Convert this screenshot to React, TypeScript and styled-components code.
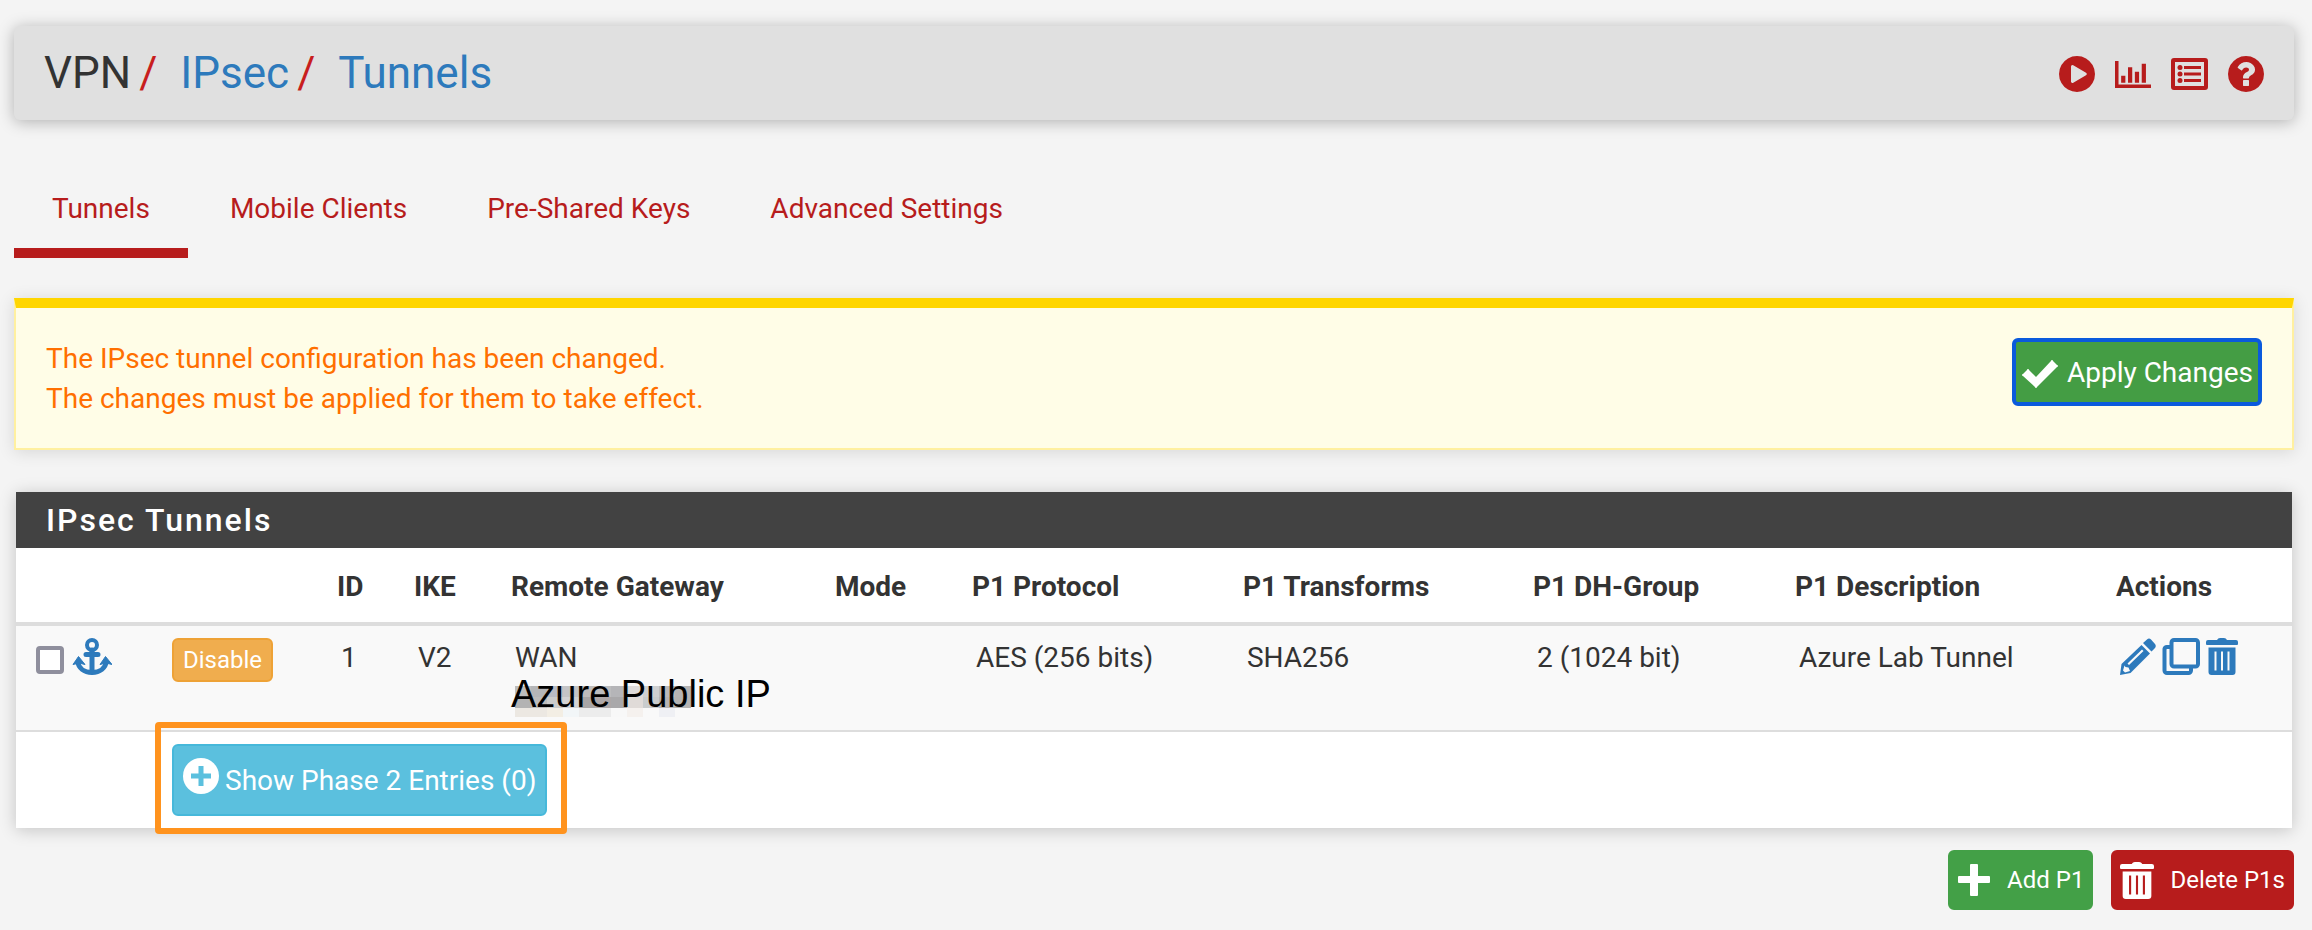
import React from "react";
import styled, { createGlobalStyle } from "styled-components";

const color = {
  page: "#f4f4f4",
  bar: "#e0e0e0",
  red: "#b71c1c",
  link: "#2d7abc",
  text: "#333333",
  line: "#dddddd",
};

const GlobalStyle = createGlobalStyle`
  * { box-sizing: border-box; }
  body {
    margin: 0;
    background: ${color.page};
    color: ${color.text};
    font-family: Roboto, "Liberation Sans", sans-serif;
    font-size: 28px;
    line-height: 40px;
  }
  a { color: inherit; text-decoration: none; }
  svg { display: block; flex: none; }
`;

const Page = styled.div`
  padding: 26px 18px 20px 14px;
`;

const TitleBar = styled.header`
  display: flex;
  align-items: center;
  justify-content: space-between;
  min-height: 94px;
  padding: 0 30px;
  border-radius: 6px;
  background: ${color.bar};
  box-shadow: 0 2px 16px rgba(0, 0, 0, 0.28);
`;

const Breadcrumb = styled.h1`
  display: flex;
  margin: 0;
  font-size: 44px;
  line-height: 52px;
  font-weight: 400;
`;

const Crumb = styled.span`
  & + &::before {
    content: "/";
    margin: 0 23px 0 8px;
    color: #c81e1e;
  }
`;

const CrumbLink = styled.a`
  color: ${color.link};
`;

const TitleIcons = styled.nav`
  display: flex;
  align-items: center;
  gap: 20px;
  padding-top: 2px;
  color: ${color.red};
`;

const Tabs = styled.nav`
  display: flex;
  flex-wrap: wrap;
  gap: 4px;
  margin: 48px 0 40px;
`;

const Tab = styled.a<{ $active?: boolean }>`
  padding: 21px 38px 19px;
  border-bottom: 10px solid ${(p) => (p.$active ? color.red : "transparent")};
  color: ${color.red};
`;

const Alert = styled.section`
  display: flex;
  align-items: flex-start;
  justify-content: space-between;
  padding: 30px;
  border: 2px solid #fff0a0;
  border-top: 10px solid #ffd600;
  background: #fffde7;
  box-shadow: 0 2px 16px rgba(0, 0, 0, 0.12);
  color: #ff6f00;
`;

const AlertText = styled.p`
  margin: 0;
  padding-top: 1px;
  margin-bottom: -1px;
`;

const variants = {
  success: { bg: "#43a047", border: "#43a047" },
  focused: { bg: "#449d44", border: "#0a5adc" },
  danger: { bg: "#b71c1c", border: "#b71c1c" },
  warning: { bg: "#f0ad4e", border: "#eea236" },
  info: { bg: "#5bc0de", border: "#46b8da" },
};

const sizes = {
  small: { height: 44, top: 0, pad: 9, font: 24, gap: 0 },
  medium: { height: 60, top: 0, pad: 7, font: 24, gap: 16 },
  large: { height: 68, top: 2, pad: 5, font: 28, gap: 8 },
  wide: { height: 72, top: 2, pad: 9, font: 28, gap: 6 },
};

const Button = styled.button<{
  $variant: keyof typeof variants;
  $size: keyof typeof sizes;
}>`
  display: inline-flex;
  align-items: center;
  gap: ${(p) => sizes[p.$size].gap}px;
  height: ${(p) => sizes[p.$size].height}px;
  padding: ${(p) => sizes[p.$size].top}px ${(p) => sizes[p.$size].pad}px 0;
  border: ${(p) => (p.$variant === "focused" ? 4 : 2)}px solid
    ${(p) => variants[p.$variant].border};
  border-radius: 6px;
  background: ${(p) => variants[p.$variant].bg};
  color: #ffffff;
  font: inherit;
  font-size: ${(p) => sizes[p.$size].font}px;
  white-space: nowrap;
  cursor: pointer;
`;

const Panel = styled.section`
  margin: 42px 2px 0;
  background: #ffffff;
  box-shadow: 0 2px 16px rgba(0, 0, 0, 0.2);
`;

const PanelTitle = styled.h2`
  margin: 0;
  padding: 8px 30px;
  background: #424242;
  color: #ffffff;
  font-size: 32px;
  line-height: 40px;
  font-weight: 500;
  letter-spacing: 2px;
`;

const Table = styled.table`
  width: 100%;
  border-collapse: separate;
  border-spacing: 0;
  table-layout: fixed;
`;

const Col = styled.col<{ $share: number }>`
  width: ${(p) => p.$share}%;
`;

const HeadCell = styled.th`
  padding: 19px 0 15px 6px;
  border-bottom: 4px solid ${color.line};
  text-align: left;
  font-weight: 700;
  white-space: nowrap;
`;

const Cell = styled.td`
  padding: 12px 0 12px 10px;
  vertical-align: top;
  white-space: nowrap;
  background: #f9f9f9;
`;

const DetailCell = styled(Cell)`
  border-top: 2px solid ${color.line};
  background: #ffffff;
`;

const SelectBox = styled.div`
  display: flex;
  align-items: flex-start;
  gap: 8px;
  padding-left: 10px;
  color: ${color.link};
`;

const CheckBox = styled.input`
  appearance: none;
  width: 28px;
  height: 28px;
  margin: 8px 0 0;
  border: 4px solid #8f8f9d;
  border-radius: 4px;
  background: #ffffff;
`;

const Actions = styled.div`
  display: flex;
  gap: 6px;
  color: ${color.link};
`;

const GatewayNote = styled.div`
  position: relative;
  margin: 0 0 8px -4px;
  color: #000000;
  font-family: "Liberation Sans", Arial, sans-serif;
  font-size: 38px;
  line-height: 32px;
`;

const NoteText = styled.span`
  position: relative;
`;

const Redaction = styled.svg`
  position: absolute;
  left: 4px;
  top: 8px;
`;

const HighlightAnchor = styled.div`
  position: relative;
  display: inline-flex;
  vertical-align: top;
`;

const Highlight = styled.div`
  position: absolute;
  inset: -22px -20px -18px -17px;
  border: 6px solid #ff931e;
  border-radius: 4px;
  pointer-events: none;
`;

const FooterActions = styled.div`
  display: flex;
  justify-content: flex-end;
  gap: 18px;
  margin-top: 22px;
`;

const PlayIcon = () => (
  <svg width="36" height="36" viewBox="128 128 1536 1536" fill="currentColor">
    <path d="M896 128q209 0 385.500 103t279.500 279.500 103 385.500-103 385.500-279.500 279.500-385.500 103-385.500-103-279.500-279.500-103-385.500 103-385.500 279.500-279.500 385.500-103zm384 823q32-18 32-55t-32-55l-544-320q-31-19-64-1-32 19-32 55v640q0 36 32 55 16 8 32 8 17 0 32-9z" />
  </svg>
);

const ChartIcon = () => (
  <svg width="36" height="27" viewBox="0 128 2048 1536" fill="currentColor">
    <path d="M0 128h200v1336h1848v200H0z M350 960h240v400H350z M740 480h240v880H740z M1130 740h240v620h-240z M1520 280h240v1080h-240z" />
  </svg>
);

const ListIcon = () => (
  <svg width="37" height="32" viewBox="0 0 37 32" fill="currentColor">
    <path
      fillRule="evenodd"
      d="M3 0h31a3 3 0 0 1 3 3v26a3 3 0 0 1-3 3H3a3 3 0 0 1-3-3V3a3 3 0 0 1 3-3zM4 4v24h29V4z"
    />
    <circle cx="9" cy="9.500" r="2.500" />
    <circle cx="9" cy="16" r="2.500" />
    <circle cx="9" cy="22.500" r="2.500" />
    <path d="M13 8h17v3H13zM13 14.500h17v3H13zM13 21h17v3H13z" />
  </svg>
);

const HelpIcon = () => (
  <svg width="36" height="36" viewBox="128 128 1536 1536" fill="currentColor">
    <path d="M1024 1376v-192q0-14-9-23t-23-9h-192q-14 0-23 9t-9 23v192q0 14 9 23t23 9h192q14 0 23-9t9-23zm256-672q0-88-55.500-163t-138.500-116-170-41q-243 0-371 213-15 24 8 42l132 100q7 6 19 6 16 0 25-12 53-68 86-92 34-24 86-24 48 0 85.500 26t37.500 59q0 38-20 61t-68 45q-63 28-115.500 86.500t-52.500 125.500v36q0 14 9 23t23 9h192q14 0 23-9t9-23q0-19 21.500-49.500t54.500-49.500q32-18 49-28.500t46-35 44.500-48 28-60.500 12.500-81zm384 192q0 209-103 385.500t-279.500 279.500-385.500 103-385.500-103-279.500-279.500-103-385.500 103-385.500 279.500-279.500 385.500-103 385.500 103 279.500 279.500 103 385.500z" />
  </svg>
);

const CheckIcon = () => (
  <svg width="38" height="40" viewBox="0 0 38 40" fill="currentColor">
    <path d="M2 21l4-4a1 1 0 0 1 2 0l7 7L30 8a1 1 0 0 1 2 0l4 4a1 1 0 0 1 0 2L16 34a1 1 0 0 1-2 0L2 23a1 1 0 0 1 0-2z" />
  </svg>
);

const AnchorIcon = () => (
  <svg width="40" height="37" viewBox="0 0 40 37" fill="none" stroke="currentColor">
    <circle cx="20" cy="7" r="5" strokeWidth="4" />
    <path d="M20 12v22M14 16.500h12" strokeWidth="5" strokeLinecap="round" />
    <path d="M5.500 23c1 7 6.500 11.500 14.500 11.500S33.500 30 34.500 23" strokeWidth="5" />
    <path
      d="M6.500 18.500l6.500 8-6-1.500-6 1.500zM33.500 18.500l6.500 8-6-1.500-6 1.500z"
      fill="currentColor"
      strokeWidth="1"
      strokeLinejoin="round"
    />
  </svg>
);

const PencilIcon = () => (
  <svg width="36" height="37" viewBox="0 0 36 37" fill="currentColor">
    <path d="M27 1.500q2-2 4 0l4 4.500q1.500 2 0 4l-3.500 3.500-8.500-8.500z" />
    <path
      fillRule="evenodd"
      d="M21.500 7L30 15.500 10.500 35 0 37l1.500-11zM22 11.500L7.500 25.500l1.500 1.500 14.500-14zM4.500 27.500l-1.500 5 2 2 5-1.500-1.500-3.500-3-.5z"
    />
  </svg>
);

const CloneIcon = () => (
  <svg width="38" height="37" viewBox="0 0 38 37" fill="none" stroke="currentColor" strokeWidth="4">
    <rect x="9.500" y="2" width="26.500" height="26.500" rx="2.500" />
    <path d="M9.500 9H5A2.500 2.500 0 0 0 2.500 11v21.500A2.500 2.500 0 0 0 5 35h21.500A2.500 2.500 0 0 0 29 32.500v-4" />
  </svg>
);

const TrashIcon = ({ wide }: { wide?: boolean }) => (
  <svg width={wide ? 34 : 32} height="37" viewBox="0 0 32 37" preserveAspectRatio="none" fill="currentColor">
    <path d="M11 2q1-2 3-2h4q2 0 3 2h9q2 0 2 2v2q0 1-1 1H1q-1 0-1-1V4q0-2 2-2z" />
    <path
      fillRule="evenodd"
      d="M2.500 9.500h27V34q0 3-3 3h-21q-3 0-3-3zM8.500 13.500v19h2v-19zM15 13.500v19h2v-19zM21.500 13.500v19h2v-19z"
    />
  </svg>
);

const PlusIcon = () => (
  <svg width="34" height="34" viewBox="0 0 34 34" fill="currentColor">
    <path d="M14 1h6q1 0 1 1v11h11q1 0 1 1v5q0 1-1 1H21v12q0 1-1 1h-6q-1 0-1-1V20H2q-1 0-1-1v-5q0-1 1-1h11V2q0-1 1-1z" />
  </svg>
);

const PlusCircleIcon = () => (
  <svg width="36" height="46" viewBox="0 0 36 46">
    <circle cx="18" cy="18" r="18" fill="currentColor" />
    <path d="M18 8v20M8 18h20" stroke="#5bc0de" strokeWidth="5" />
  </svg>
);

const mosaic = [
  ["#bdbdbd", "#b5b6b8", "#b9bcc4", "#c4c4c6", "#bfbcbb", "#bcbcbd", "#b5b5b8", "#dedbda", "#cfd0d1", "#bcbaba", "#b6b4b4"],
  ["#b3b3b3", "#bdbcbb", "#cbcccb", "#d2d2d4", "#a9a6a6", "#ada7a7", "#a9a8aa", "#e0dbd8", "#c9cccd", "#b7b4b3", "#b4b3b2"],
  ["#ece8e2", "#ece8e2", "#f3eee4", "#f2f6f8", "#ececec", "#ececec", "#f8f8f8", "#f5f1ee", "#f9f9f9", "#eff0f4", "#f9f9f9"],
];

const columns = [
  { title: "", width: 146 },
  { title: "", width: 169 },
  { title: "ID", width: 77 },
  { title: "IKE", width: 97 },
  { title: "Remote Gateway", width: 324 },
  { title: "Mode", width: 137 },
  { title: "P1 Protocol", width: 271 },
  { title: "P1 Transforms", width: 290 },
  { title: "P1 DH-Group", width: 262 },
  { title: "P1 Description", width: 321 },
  { title: "Actions", width: 182 },
];
const totalWidth = columns.reduce((sum, c) => sum + c.width, 0);

export default function App() {
  return (
    <>
      <GlobalStyle />
      <Page>
        <TitleBar>
          <Breadcrumb>
            <Crumb>VPN</Crumb>
            <Crumb>
              <CrumbLink href="#ipsec">IPsec</CrumbLink>
            </Crumb>
            <Crumb>
              <CrumbLink href="#tunnels">Tunnels</CrumbLink>
            </Crumb>
          </Breadcrumb>
          <TitleIcons>
            <a href="#start" aria-label="Start service"><PlayIcon /></a>
            <a href="#status" aria-label="Status"><ChartIcon /></a>
            <a href="#logs" aria-label="Logs"><ListIcon /></a>
            <a href="#help" aria-label="Help"><HelpIcon /></a>
          </TitleIcons>
        </TitleBar>

        <Tabs>
          <Tab href="#tunnels" $active>Tunnels</Tab>
          <Tab href="#mobile">Mobile Clients</Tab>
          <Tab href="#keys">Pre-Shared Keys</Tab>
          <Tab href="#advanced">Advanced Settings</Tab>
        </Tabs>

        <Alert>
          <AlertText>
            The IPsec tunnel configuration has been changed.
            <br />
            The changes must be applied for them to take effect.
          </AlertText>
          <Button $variant="focused" $size="large">
            <CheckIcon />
            Apply Changes
          </Button>
        </Alert>

        <Panel>
          <PanelTitle>IPsec Tunnels</PanelTitle>
          <Table>
            <colgroup>
              {columns.map((c, i) => (
                <Col key={i} $share={(c.width / totalWidth) * 100} />
              ))}
            </colgroup>
            <thead>
              <tr>
                {columns.map((c, i) => (
                  <HeadCell key={i}>{c.title}</HeadCell>
                ))}
              </tr>
            </thead>
            <tbody>
              <tr>
                <Cell>
                  <SelectBox>
                    <CheckBox type="checkbox" aria-label="Select tunnel 1" />
                    <AnchorIcon />
                  </SelectBox>
                </Cell>
                <Cell>
                  <Button $variant="warning" $size="small">Disable</Button>
                </Cell>
                <Cell>1</Cell>
                <Cell>V2</Cell>
                <Cell>
                  WAN
                  <GatewayNote>
                    <Redaction width="176" height="31" viewBox="0 0 176 31" shapeRendering="crispEdges">
                      {mosaic.map((row, y) =>
                        row.map((fill, x) => (
                          <rect key={`${x}-${y}`} x={x * 16} y={y * 11} width="16" height={y === 2 ? 9 : 11} fill={fill} />
                        ))
                      )}
                    </Redaction>
                    <NoteText>Azure Public IP</NoteText>
                  </GatewayNote>
                </Cell>
                <Cell />
                <Cell>AES (256 bits)</Cell>
                <Cell>SHA256</Cell>
                <Cell>2 (1024 bit)</Cell>
                <Cell>Azure Lab Tunnel</Cell>
                <Cell>
                  <Actions>
                    <a href="#edit" aria-label="Edit"><PencilIcon /></a>
                    <a href="#clone" aria-label="Copy"><CloneIcon /></a>
                    <a href="#delete" aria-label="Delete"><TrashIcon /></a>
                  </Actions>
                </Cell>
              </tr>
              <tr>
                <DetailCell />
                <DetailCell colSpan={10}>
                  <HighlightAnchor>
                    <Button $variant="info" $size="wide">
                      <PlusCircleIcon />
                      Show Phase 2 Entries (0)
                    </Button>
                    <Highlight />
                  </HighlightAnchor>
                </DetailCell>
              </tr>
            </tbody>
          </Table>
        </Panel>

        <FooterActions>
          <Button $variant="success" $size="medium">
            <PlusIcon />
            Add P1
          </Button>
          <Button $variant="danger" $size="medium">
            <TrashIcon wide />
            Delete P1s
          </Button>
        </FooterActions>
      </Page>
    </>
  );
}
